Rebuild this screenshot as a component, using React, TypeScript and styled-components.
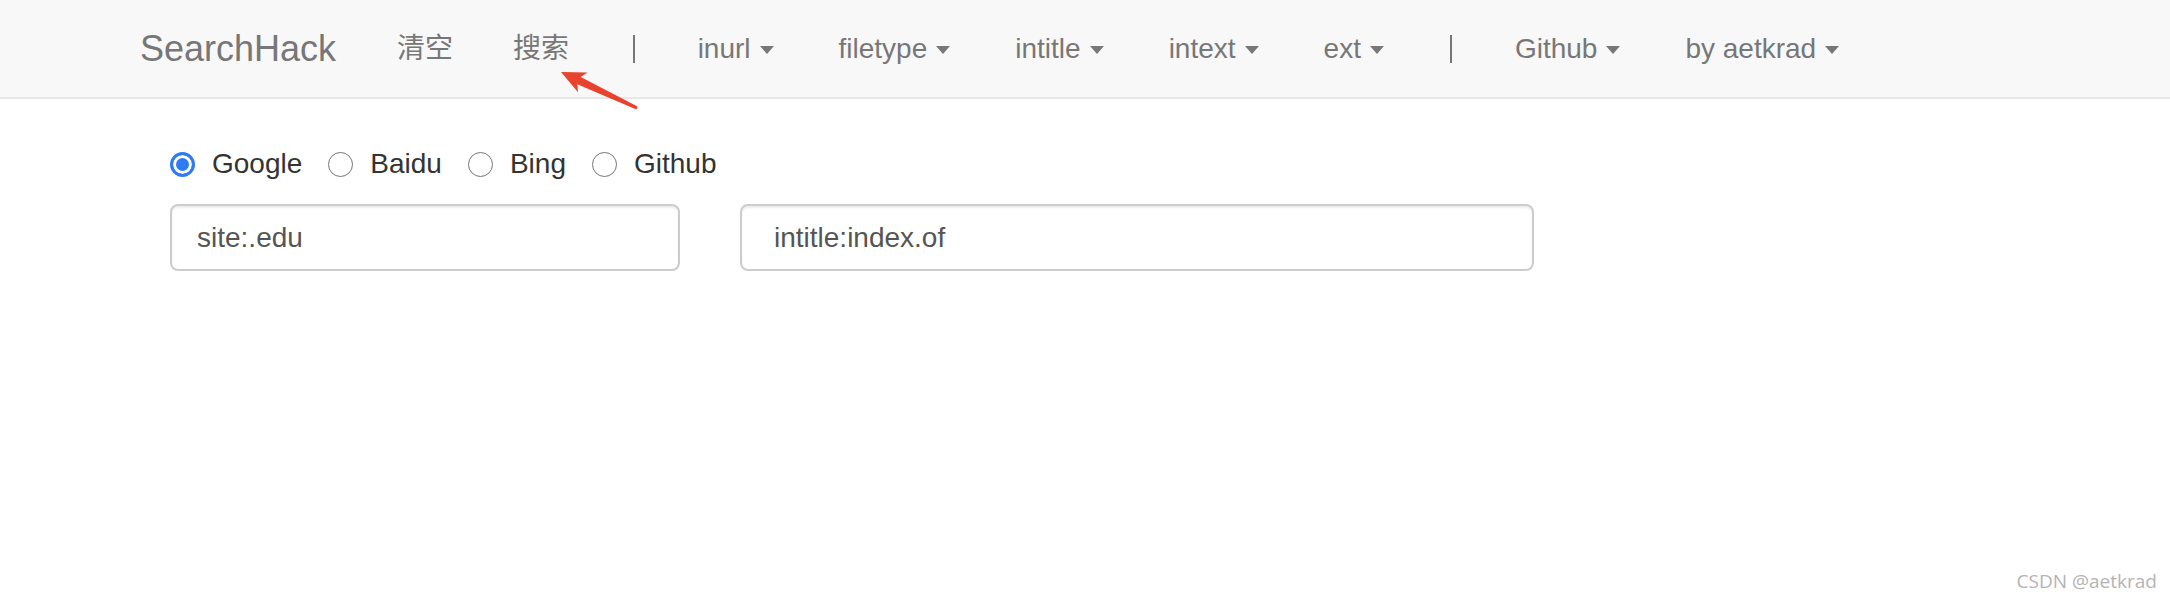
import styled, { createGlobalStyle } from "styled-components";

const Global = createGlobalStyle`
  html, body {
    margin: 0;
    padding: 0;
    background: #fff;
  }
  body {
    font-family: "Liberation Sans", Arial, "Noto Sans CJK SC", sans-serif;
  }
`;

const Page = styled.div`
  position: relative;
  min-height: 602px;
  overflow: hidden;
`;

const Navbar = styled.nav`
  display: flex;
  align-items: center;
  height: 97px;
  padding-left: 140px;
  background: #f8f8f8;
  border-bottom: 2px solid #e7e7e7;
`;

const Brand = styled.a`
  font-size: 36px;
  color: #777;
  text-decoration: none;
  padding-right: 31px;
  line-height: 1;
`;

const NavLink = styled.a<{ $dropdown?: boolean }>`
  display: flex;
  align-items: center;
  padding: 0 ${(p) => (p.$dropdown ? 32.5 : 30)}px;
  font-size: 28px;
  color: #777;
  text-decoration: none;
  line-height: 1;
  white-space: pre;
`;

const Divider = styled.span`
  width: 2px;
  height: 28px;
  margin: 0 30px 0 34px;
  background: #777;
`;

const Caret = styled.span`
  display: inline-block;
  width: 0;
  height: 0;
  margin-left: 9px;
  margin-top: 2px;
  border-top: 8px solid #777;
  border-left: 7px solid transparent;
  border-right: 7px solid transparent;
`;

const Main = styled.main`
  display: flex;
  flex-direction: column;
  gap: 26px;
  padding: 51px 0 0 170px;
`;

const RadioRow = styled.div`
  display: flex;
  align-items: center;
  gap: 26px;
`;

const RadioLabel = styled.label`
  display: flex;
  align-items: center;
  gap: 17px;
  font-size: 28px;
  color: #333;
  line-height: 1;
`;

const Radio = styled.input`
  appearance: none;
  margin: 0;
  width: 25px;
  height: 25px;
  box-sizing: border-box;
  border-radius: 50%;
  border: 1.5px solid #767676;
  background: #fff;
  &:checked {
    border: 3px solid #2f7bf5;
    background: #2f7bf5;
    box-shadow: inset 0 0 0 3px #fff;
  }
`;

const InputRow = styled.div`
  display: flex;
  gap: 60px;
`;

const TextInput = styled.input<{ $w: number; $pad: number }>`
  box-sizing: border-box;
  width: ${(p) => p.$w}px;
  height: 67px;
  padding: 0 ${(p) => p.$pad}px;
  border: 2px solid #ccc;
  border-radius: 8px;
  box-shadow: inset 0 2px 2px rgba(0, 0, 0, 0.075);
  font-family: "Liberation Sans", Arial, sans-serif;
  font-size: 28px;
  color: #555;
  outline: none;
`;

const Arrow = styled.svg`
  position: absolute;
  left: 550px;
  top: 60px;
`;

const Watermark = styled.div`
  position: absolute;
  right: 13px;
  bottom: 8px;
  font-family: "Open Sans", "Noto Sans", sans-serif;
  font-size: 19px;
  color: #b4b4b4;
`;

const menus = ["inurl", "filetype", "intitle", "intext", "ext"];
const engines = ["Google", "Baidu", "Bing", "Github"];

export default function App() {
  return (
    <Page>
      <Global />
      <Navbar>
        <Brand href="#">SearchHack</Brand>
        <NavLink href="#">清空</NavLink>
        <NavLink href="#">搜索</NavLink>
        <Divider />
        {menus.map((m) => (
          <NavLink key={m} href="#" $dropdown>
            {m}
            <Caret />
          </NavLink>
        ))}
        <Divider />
        <NavLink href="#" $dropdown>
          Github
          <Caret />
        </NavLink>
        <NavLink href="#" $dropdown>
          by aetkrad
          <Caret />
        </NavLink>
      </Navbar>

      <Main>
        <RadioRow>
          {engines.map((e, i) => (
            <RadioLabel key={e}>
              <Radio type="radio" name="engine" defaultChecked={i === 0} />
              {e}
            </RadioLabel>
          ))}
        </RadioRow>
        <InputRow>
          <TextInput $w={510} $pad={25} defaultValue="site:.edu" />
          <TextInput $w={794} $pad={32} defaultValue="intitle:index.of" />
        </InputRow>
      </Main>

      <Arrow width="95" height="55" viewBox="0 0 95 55">
        <polygon
          points="11,12 37.4,12.4 30.7,17 87.6,46.6 86.4,49.4 27.3,24.2 28,32.3"
          fill="#e8432d"
        />
      </Arrow>

      <Watermark>CSDN @aetkrad</Watermark>
    </Page>
  );
}
